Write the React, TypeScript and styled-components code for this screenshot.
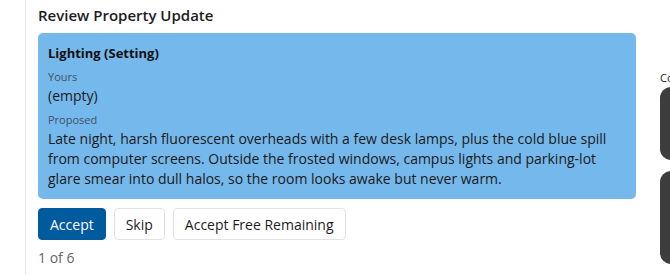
import * as React from "react"
import styled, { createGlobalStyle } from "styled-components"

const GlobalStyle = createGlobalStyle`
  html, body {
    margin: 0;
    padding: 0;
    background: #ffffff;
  }
  body {
    font-family: "Open Sans", "Noto Sans", sans-serif;
    color: #1d1d1f;
  }
`

const App = () => (
  <Page>
    <GlobalStyle />
    <Rail />
    <Main>
      <Title>Review Property Update</Title>
      <Card>
        <FieldName>Lighting (Setting)</FieldName>
        <Label>Yours</Label>
        <Value>(empty)</Value>
        <Label>Proposed</Label>
        <Value>
          Late night, harsh fluorescent overheads with a few desk lamps, plus the cold blue spill
          from computer screens. Outside the frosted windows, campus lights and parking-lot
          glare smear into dull halos, so the room looks awake but never warm.
        </Value>
      </Card>
      <Actions>
        <Button primary>Accept</Button>
        <Button>Skip</Button>
        <Button>Accept Free Remaining</Button>
      </Actions>
      <Counter>1 of 6</Counter>
    </Main>
    <Side>
      <SideLabel>Co</SideLabel>
      <DarkPanel h={73} />
      <DarkPanel h={93} />
    </Side>
  </Page>
)

export default App

const Page = styled.div`
  display: flex;
  height: 275px;
  width: 670px;
  overflow: hidden;
`
const Rail = styled.div`
  width: 25px;
  flex-shrink: 0;
  border-right: 1px solid #e8e8e8;
`
const Main = styled.div`
  width: 598px;
  flex-shrink: 0;
  padding: 5px 0 0 12px;
  display: flex;
  flex-direction: column;
`
const Title = styled.h2`
  margin: 0 0 8px;
  font-size: 15px;
  font-weight: 600;
  line-height: 20px;
  color: #1d1d1f;
`
const Card = styled.div`
  background: #75b8ec;
  border-radius: 5px;
  padding: 11px 10px 10px;
`
const FieldName = styled.div`
  font-size: 13px;
  font-weight: 700;
  line-height: 18px;
  color: #111;
  margin-bottom: 7px;
`
const Label = styled.div`
  font-size: 11px;
  line-height: 15px;
  color: #3f5366;
`
const Value = styled.div`
  font-size: 14px;
  line-height: 20px;
  color: #1a1a1a;
  margin: 2px 0 6px;
  &:last-child {
    margin-bottom: 0;
  }
`
const Actions = styled.div`
  display: flex;
  gap: 8px;
  margin-top: 9px;
`
const Button = styled.button<{ primary?: boolean }>`
  height: 32px;
  padding: 0 11px;
  font-family: inherit;
  font-size: 14px;
  border-radius: 4px;
  border: 1px solid ${(p) => (p.primary ? "#005a9e" : "#e2e2e2")};
  background: ${(p) => (p.primary ? "#005a9e" : "#ffffff")};
  color: ${(p) => (p.primary ? "#ffffff" : "#1d1d1f")};
  cursor: pointer;
`
const Counter = styled.div`
  margin-top: 8px;
  font-size: 14px;
  line-height: 20px;
  color: #666;
`
const Side = styled.div`
  margin-left: 24px;
  width: 200px;
  flex-shrink: 0;
  padding-top: 70px;
  display: flex;
  flex-direction: column;
`
const SideLabel = styled.div`
  font-size: 11px;
  line-height: 15px;
  color: #222;
  margin-bottom: 2px;
`
const DarkPanel = styled.div<{ h: number }>`
  height: ${(p) => p.h}px;
  background: #3d3d3d;
  border-radius: 11px;
  margin-bottom: 11px;
`
